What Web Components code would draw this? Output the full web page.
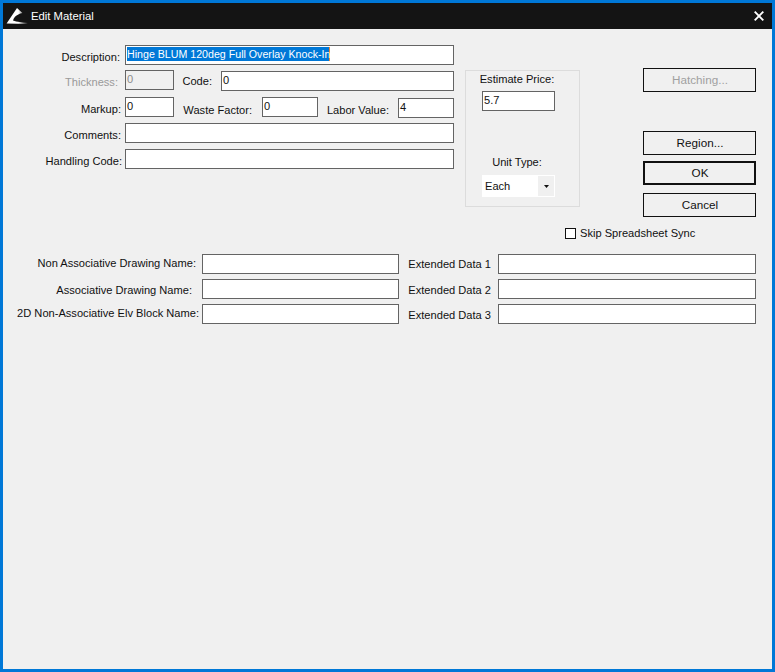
<!DOCTYPE html>
<html>
<head>
<meta charset="utf-8">
<title>Edit Material</title>
<style>
    html, body { margin: 0; padding: 0; }
    body { font-family: "Liberation Sans", Arial, sans-serif; font-size: 11.1px; color: #111; }
</style>
</head>
<body>

<dialog-window>
    <title-bar slot="title">Edit Material</title-bar>

    <div style="display:flex; align-items:flex-start; height:188px">
        <div style="width:451px; margin-top:16px; display:flex; flex-direction:column">
            <form-row>
                <field-label width="122" end="5" drop="2">Description:</field-label>
                <text-box width="329"><span style="background:#0078d7;color:#fff;display:inline-block;height:14px;line-height:14px;width:202px;border-right:1px solid #e8873a;margin-top:1px;font-size:10.65px">Hinge BLUM 120deg Full Overlay Knock-In</span></text-box>
            </form-row>
            <form-row top="5">
                <field-label width="122" end="7" drop="2" disabled>Thickness:</field-label>
                <text-box width="49" disabled>0</text-box>
                <field-label width="47" end="9" drop="1">Code:</field-label>
                <text-box width="233" drop="1">0</text-box>
            </form-row>
            <form-row top="6">
                <field-label width="122" end="4" drop="2">Markup:</field-label>
                <text-box width="49">0</text-box>
                <field-label width="88" end="10" drop="3">Waste Factor:</field-label>
                <text-box width="56">0</text-box>
                <field-label width="80" end="9" drop="3">Labor Value:</field-label>
                <text-box width="56" drop="1">4</text-box>
            </form-row>
            <form-row top="5">
                <field-label width="122" end="4" drop="2">Comments:</field-label>
                <text-box width="329"></text-box>
            </form-row>
            <form-row top="6">
                <field-label width="122" end="3" drop="2">Handling Code:</field-label>
                <text-box width="329"></text-box>
            </form-row>
        </div>

        <price-group>
            <span slot="price-label">Estimate Price:</span>
            <text-box slot="price" width="73">5.7</text-box>
            <span slot="unit-label">Unit Type:</span>
            <combo-box slot="unit">Each</combo-box>
        </price-group>

        <div style="width:113px; margin-left:63px; margin-top:39px; display:flex; flex-direction:column">
            <push-button disabled>Hatching...</push-button>
            <push-button style="margin-top:39px">Region...</push-button>
            <push-button style="margin-top:6px" default>OK</push-button>
            <push-button style="margin-top:8px">Cancel</push-button>
        </div>
    </div>

    <check-box style="margin:10px 0 0 562px">Skip Spreadsheet Sync</check-box>

    <div style="margin-top:15px; display:flex; flex-direction:column; gap:5px">
        <form-row>
            <field-label width="199" end="6" drop="-1">Non Associative Drawing Name:</field-label>
            <text-box width="197"></text-box>
            <field-label width="99" end="7">Extended Data 1</field-label>
            <text-box width="258"></text-box>
        </form-row>
        <form-row>
            <field-label width="199" end="10" drop="1">Associative Drawing Name:</field-label>
            <text-box width="197"></text-box>
            <field-label width="99" end="7" drop="1">Extended Data 2</field-label>
            <text-box width="258"></text-box>
        </form-row>
        <form-row>
            <field-label width="199" end="3" drop="-1">2D Non-Associative Elv Block Name:</field-label>
            <text-box width="197"></text-box>
            <field-label width="99" end="7" drop="1">Extended Data 3</field-label>
            <text-box width="258"></text-box>
        </form-row>
    </div>
</dialog-window>

<script>
class DialogWindow extends HTMLElement {
    constructor(){
        super();
        this.attachShadow({mode: "open"});
        this.shadowRoot.innerHTML = `
        <style>
            :host {
                display: flex;
                flex-direction: column;
                box-sizing: border-box;
                width: 775px;
                height: 672px;
                border: 3px solid #0078d7;
                background: #f0f0f0;
                overflow: hidden;
            }
        </style>
        <slot name="title"></slot>
        <slot></slot>
        `;
    }
}
customElements.define("dialog-window", DialogWindow);

class TitleBar extends HTMLElement {
    constructor(){
        super();
        this.attachShadow({mode: "open"});
        this.shadowRoot.innerHTML = `
        <style>
            :host {
                display: flex;
                align-items: center;
                height: 26px;
                background: #141414;
                color: #fff;
                font-size: 11.3px;
            }
            .logo { width: 25px; height: 20px; margin-left: 3px; flex: none; }
            .text { flex: 1; }
            .close { width: 10px; height: 10px; margin-right: 8px; flex: none; }
        </style>
        <svg class="logo" viewBox="0 0 25 20">
            <defs>
                <linearGradient id="fade" x1="0" x2="1" y1="0" y2="0">
                    <stop offset="0" stop-color="#fff"/>
                    <stop offset="0.55" stop-color="#fff"/>
                    <stop offset="1" stop-color="#fff" stop-opacity="0"/>
                </linearGradient>
            </defs>
            <path d="M0.6 17.6 L11 2 L16.4 7 C13.5 7.6 11 9 9 10.8 C8 11.8 7.4 13 7 14.4 C11 15.8 16 16.4 21.8 16.8 L21.8 18 C15 18 8 17.8 0.6 17.6 Z" fill="url(#fade)"/>
        </svg>
        <span class="text"><slot></slot></span>
        <svg class="close" viewBox="0 0 10 10">
            <path d="M0.7 0.7 L9.3 9.3 M9.3 0.7 L0.7 9.3" stroke="#fff" stroke-width="1.9" fill="none"/>
        </svg>
        `;
    }
}
customElements.define("title-bar", TitleBar);

class FormRow extends HTMLElement {
    constructor(){
        super();
        this.attachShadow({mode: "open"});
        this.shadowRoot.innerHTML = `
        <style>
            :host {
                display: flex;
                align-items: flex-start;
                margin-top: ${this.getAttribute("top") || 0}px;
            }
        </style>
        <slot></slot>
        `;
    }
}
customElements.define("form-row", FormRow);

class FieldLabel extends HTMLElement {
    constructor(){
        super();
        const drop = Number(this.getAttribute("drop") || 0);
        this.attachShadow({mode: "open"});
        this.shadowRoot.innerHTML = `
        <style>
            :host {
                display: block;
                box-sizing: border-box;
                flex: none;
                width: ${this.getAttribute("width")}px;
                height: 20px;
                padding-right: ${this.getAttribute("end") || 0}px;
                line-height: ${20 + 2 * drop}px;
                text-align: right;
                white-space: nowrap;
                color: #111;
            }
            :host([disabled]) { color: #9a9a9a; }
        </style>
        <slot></slot>
        `;
    }
}
customElements.define("field-label", FieldLabel);

class TextBox extends HTMLElement {
    constructor(){
        super();
        this.attachShadow({mode: "open"});
        this.shadowRoot.innerHTML = `
        <style>
            :host {
                display: block;
                box-sizing: border-box;
                flex: none;
                width: ${this.getAttribute("width")}px;
                height: 20px;
                margin-top: ${this.getAttribute("drop") || 0}px;
                border: 1px solid #646464;
                background: #fff;
                padding: 0 1px;
                line-height: 16px;
                white-space: nowrap;
                overflow: hidden;
            }
            :host([disabled]) { background: #f0f0f0; color: #8c8c8c; }
        </style>
        <slot></slot>
        `;
    }
}
customElements.define("text-box", TextBox);

class PriceGroup extends HTMLElement {
    constructor(){
        super();
        this.attachShadow({mode: "open"});
        this.shadowRoot.innerHTML = `
        <style>
            :host {
                display: flex;
                flex-direction: column;
                box-sizing: border-box;
                flex: none;
                width: 115px;
                height: 137px;
                margin: 41px 0 0 11px;
                border: 1px solid #dcdcdc;
                padding-right: 8px;
                align-items: center;
            }
            .label { line-height: 14px; white-space: nowrap; }
            .price-label { margin-top: 1px; margin-right: 3px; }
            .unit-label { margin-top: 44px; margin-right: 3px; }
            ::slotted(text-box) { margin-top: 5px; }
            ::slotted(combo-box) { margin-top: 6px; }
        </style>
        <span class="label price-label"><slot name="price-label"></slot></span>
        <slot name="price"></slot>
        <span class="label unit-label"><slot name="unit-label"></slot></span>
        <slot name="unit"></slot>
        `;
    }
}
customElements.define("price-group", PriceGroup);

class ComboBox extends HTMLElement {
    constructor(){
        super();
        this.attachShadow({mode: "open"});
        this.shadowRoot.innerHTML = `
        <style>
            :host {
                display: flex;
                box-sizing: border-box;
                width: 73px;
                height: 22px;
                background: #fff;
                border: 1px solid #fff;
                line-height: 20px;
            }
            .value { flex: 1; padding-left: 2px; }
            .arrow {
                width: 16px;
                background: #f0f0f0;
                display: flex;
                align-items: center;
                justify-content: center;
            }
            .arrow svg { width: 5px; height: 3px; }
        </style>
        <span class="value"><slot></slot></span>
        <span class="arrow"><svg viewBox="0 0 5 3"><path d="M0 0 H5 L2.5 3 Z" fill="#111"/></svg></span>
        `;
    }
}
customElements.define("combo-box", ComboBox);

class PushButton extends HTMLElement {
    constructor(){
        super();
        this.attachShadow({mode: "open"});
        this.shadowRoot.innerHTML = `
        <style>
            :host {
                display: flex;
                align-items: center;
                justify-content: center;
                box-sizing: border-box;
                height: 24px;
                padding: 0 0 1px 1px;
                border: 1px solid #111;
                background: #f0f0f0;
                color: #111;
                font-size: 11.7px;
            }
            :host([default]) { border-width: 2px; }
            :host([disabled]) { color: #a0a0a0; }
        </style>
        <slot></slot>
        `;
    }
}
customElements.define("push-button", PushButton);

class CheckBox extends HTMLElement {
    constructor(){
        super();
        this.attachShadow({mode: "open"});
        this.shadowRoot.innerHTML = `
        <style>
            :host {
                display: flex;
                align-items: center;
                height: 12px;
                white-space: nowrap;
            }
            .box {
                box-sizing: border-box;
                width: 11px;
                height: 11px;
                border: 1px solid #111;
                background: #fff;
                margin-right: 4px;
            }
        </style>
        <span class="box"></span>
        <slot></slot>
        `;
    }
}
customElements.define("check-box", CheckBox);
</script>
</body>
</html>
